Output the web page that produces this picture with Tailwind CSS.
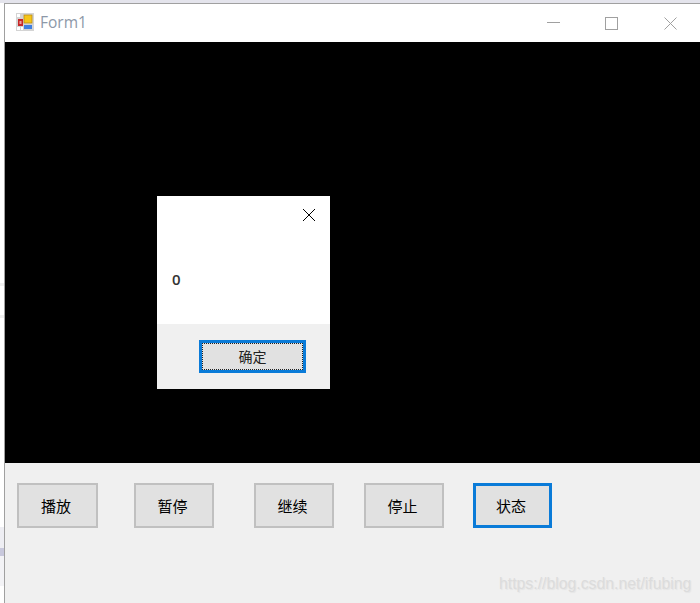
<!DOCTYPE html>
<html><head><meta charset="utf-8"><script src="https://cdn.jsdelivr.net/npm/@tailwindcss/browser@4"></script></head>
<body class="m-0 overflow-hidden bg-white">
<div class="relative flex flex-col w-[700px] h-[603px] overflow-hidden font-['Noto_Sans_CJK_SC','Liberation_Sans',sans-serif]">
  <div class="h-[3px] bg-[#e4e4ec] shrink-0"></div>
  <div class="flex flex-1 min-h-0">
    <div class="w-[4px] shrink-0 flex flex-col bg-white">
      <div class="h-[280px]"></div>
      <div class="h-[3px] bg-[#f0f0f0]"></div>
      <div class="h-[29px]"></div>
      <div class="h-[3px] bg-[#f0f0f0]"></div>
      <div class="h-[209px]"></div>
      <div class="h-[21px] bg-[#eeeef3]"></div>
      <div class="h-[8px] bg-[#c8c8dc]"></div>
      <div class="h-[30px] bg-[#f3f3f6]"></div>
    </div>
    <div class="flex-1 flex flex-col border-l border-t border-[#a0a0a0] min-w-0">
      <div class="h-[38px] shrink-0 bg-white flex items-start">
        <svg class="ml-[11px] mt-[9px]" width="18" height="18" viewBox="0 0 18 18">
          <rect x="0" y="0" width="18" height="18" fill="#d4d4d4"/>
          <rect x="1" y="1" width="3" height="3" fill="#fff"/>
          <rect x="1" y="14" width="3" height="3" fill="#fff"/>
          <rect x="5" y="14" width="2" height="3" fill="#fff"/>
          <rect x="2" y="6" width="5" height="7" fill="#c62828"/>
          <rect x="3.5" y="8" width="2" height="3" fill="#f0a0a0"/>
          <rect x="8" y="2" width="8" height="8" fill="#f5c518" stroke="#b98a10" stroke-width="0.75"/>
          <rect x="8" y="12" width="8" height="4" fill="#3f7fe0"/>
        </svg>
        <span class="ml-[6px] mt-[9px] text-[15.5px] leading-[18px] text-[#8d98a8] font-['Open_Sans','Liberation_Sans',sans-serif]">Form1</span>
        <svg class="ml-auto mt-[17px]" width="13" height="3" viewBox="0 0 13 3"><path d="M0 1.5H13" stroke="#a0a0a0" stroke-width="1"/></svg>
        <svg class="ml-[45px] mt-[13px]" width="13" height="13" viewBox="0 0 13 13"><rect x="0.5" y="0.5" width="12" height="12" fill="none" stroke="#a0a0a0"/></svg>
        <svg class="ml-[46px] mr-[23px] mt-[13px]" width="13" height="13" viewBox="0 0 13 13"><path d="M0.5 0.5L12.5 12.5M12.5 0.5L0.5 12.5" stroke="#a0a0a0" stroke-width="1"/></svg>
      </div>
      <div class="h-[421px] shrink-0 bg-black"></div>
      <div class="flex-1 bg-[#f0f0f0] relative pt-[20px] flex items-start">
        <button class="ml-[12px] w-[81px] h-[45px] pr-[3px] pt-px bg-[#e1e1e1] border-2 border-[#c0c0c0] text-[15px] text-[#000]">播放</button>
        <button class="ml-[36px] w-[80px] h-[45px] pr-[3px] pt-px bg-[#e1e1e1] border-2 border-[#c0c0c0] text-[15px] text-[#000]">暂停</button>
        <button class="ml-[40px] w-[80px] h-[45px] pr-[3px] pt-px bg-[#e1e1e1] border-2 border-[#c0c0c0] text-[15px] text-[#000]">继续</button>
        <button class="ml-[30px] w-[80px] h-[45px] pr-[3px] pt-px bg-[#e1e1e1] border-2 border-[#c0c0c0] text-[15px] text-[#000]">停止</button>
        <button class="ml-[29px] w-[79px] h-[45px] pr-[3px] pt-px bg-[#e1e1e1] border-[3px] border-[#0a7bd8] text-[15px] text-[#000]">状态</button>
        <div class="absolute left-[494px] top-[113px] text-[15.8px] leading-none text-[#dcdcdc] font-['Liberation_Sans',sans-serif] [text-shadow:1px_1px_1px_#e4e4e4]">https://blog.csdn.net/ifubing</div>
      </div>
    </div>
  </div>
  <div class="absolute left-[157px] top-[196px] w-[173px] h-[193px] bg-white flex flex-col">
    <div class="h-[128px] relative flex flex-col">
      <svg class="absolute left-[146px] top-[13px]" width="12" height="12" viewBox="0 0 12 12"><path d="M0 0L12 12M12 0L0 12" stroke="#000" stroke-width="1"/></svg>
      <span class="absolute left-[15px] top-[76px] text-[15px] leading-none font-semibold text-[#333] font-['Open_Sans','Liberation_Sans',sans-serif]">0</span>
    </div>
    <div class="flex-1 bg-[#f0f0f0] pt-[16px] pl-[42px]">
      <div class="w-[107px] h-[33px] border-[3px] border-[#0a7bd8] bg-[#e1e1e1]">
        <div class="w-full h-full border border-dotted border-[#222] flex items-center justify-center text-[14px] text-[#222]">确定</div>
      </div>
    </div>
  </div>
</div>
</body></html>
